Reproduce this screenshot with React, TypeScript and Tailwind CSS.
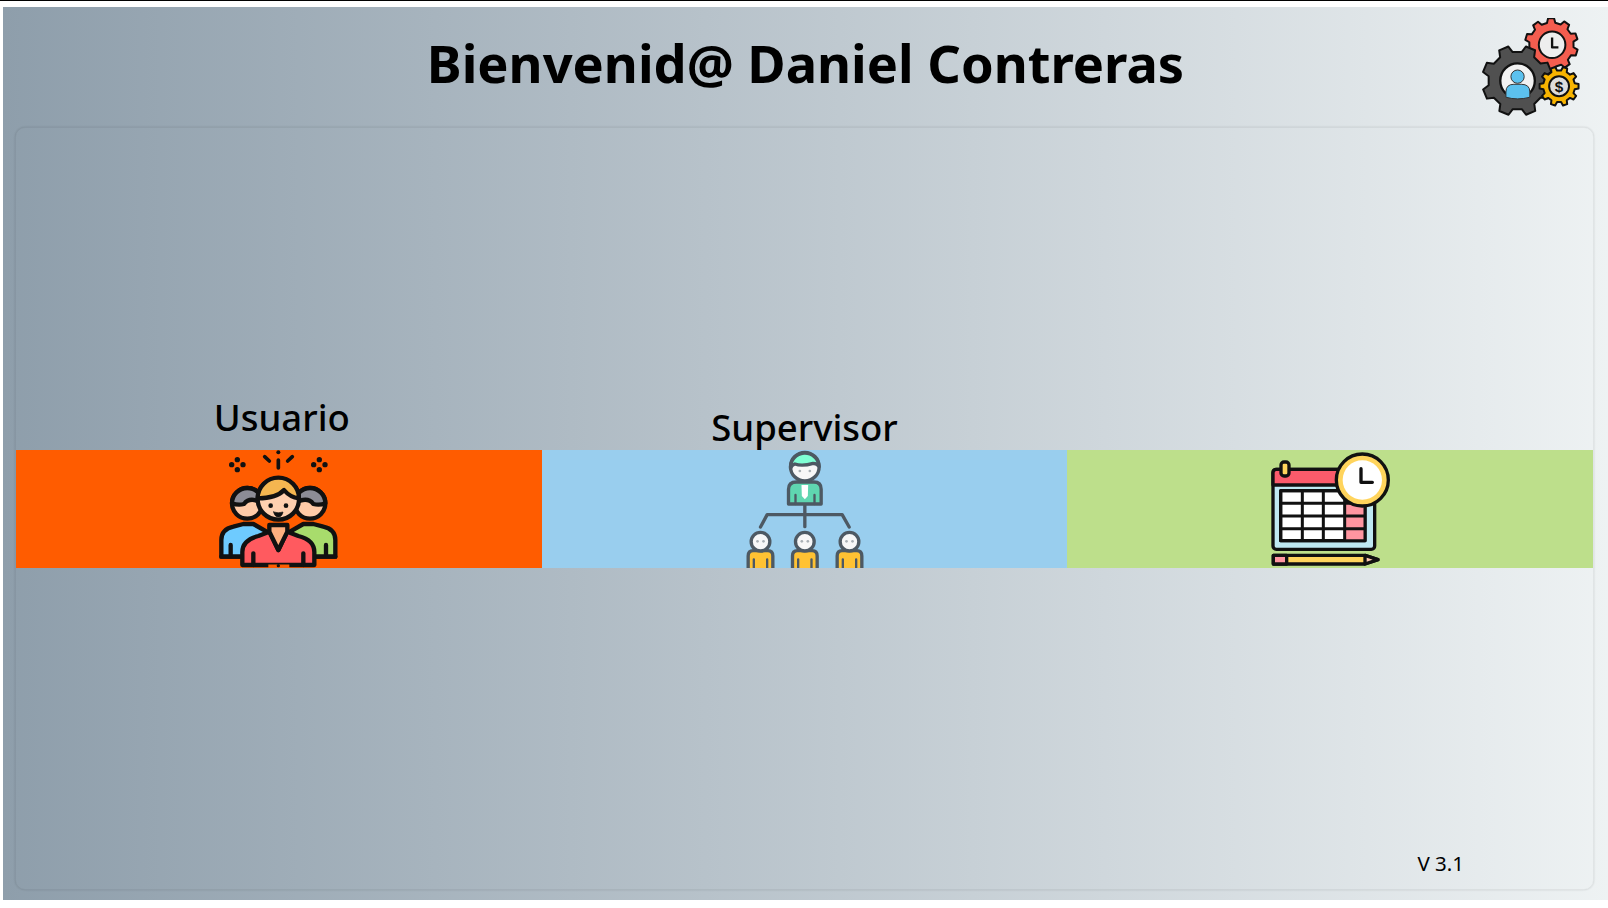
function gearPath(cx: number, cy: number, outer: number, root: number, teeth: number, rot = 0) {
  const step = (Math.PI * 2) / teeth;
  const pts: string[] = [];
  for (let i = 0; i < teeth; i++) {
    const a = rot + i * step;
    const corners: [number, number][] = [
      [root, a - step * 0.3],
      [outer, a - step * 0.18],
      [outer, a + step * 0.18],
      [root, a + step * 0.3],
    ];
    corners.forEach(([r, t]) => {
      pts.push(`${(cx + r * Math.cos(t)).toFixed(1)} ${(cy + r * Math.sin(t)).toFixed(1)}`);
    });
  }
  return `M${pts.join('L')}Z`;
}

function GearsLogo() {
  return (
    <svg viewBox="120 50 310 300" className="h-[100px] w-[103px]">
      <g stroke="#111" strokeWidth="6" strokeLinejoin="round">
        <path d={gearPath(335, 130, 80, 67, 10, 0.3)} fill="#f45d4f" />
        <circle cx="337" cy="130" r="40" fill="#eeeeee" />
        <path d="M337 108V138H356" fill="none" strokeWidth="7" />
        <path d={gearPath(232, 238, 106, 87, 8, 0.39)} fill="#505050" />
        <circle cx="233" cy="238" r="52" fill="#f2f2f2" strokeWidth="7" />
        <circle cx="233" cy="226" r="20" fill="#5cc1ee" stroke="#333" strokeWidth="3" />
        <path d="M198 288V272Q198 249 222 249H244Q270 249 270 272V288Q233 298 198 288Z" fill="#5cc1ee" stroke="#333" strokeWidth="3" />
        <path d={gearPath(358, 255, 59, 48, 10, 0)} fill="#f8b400" />
        <circle cx="358" cy="255" r="30" fill="#dddddd" />
      </g>
      <text x="358" y="272" textAnchor="middle" fontSize="46" fontWeight="700" fontFamily="Liberation Sans, sans-serif" fill="#111">
        $
      </text>
    </svg>
  );
}

function UsersIcon() {
  return (
    <svg viewBox="45.5 180 380 354" className="h-[118px] w-[127px]" strokeLinecap="round" strokeLinejoin="round">
      <g fill="#111">
        <circle cx="235" cy="187" r="6" />
        {[
          [112, 224],
          [358, 224],
        ].map(([x, y]) => (
          <g key={x}>
            <circle cx={x} cy={y - 15} r="8" />
            <circle cx={x} cy={y + 15} r="8" />
            <circle cx={x - 17} cy={y} r="8" />
            <circle cx={x + 17} cy={y} r="8" />
          </g>
        ))}
      </g>
      <path d="M235 210V234M194 200L208 213M277 200L263 213" stroke="#111" strokeWidth="11" fill="none" />
      <g stroke="#111" strokeWidth="13">
        <path d="M64 500V450Q64 418 100 410L130 402H160L200 425L150 500Z" fill="#6ecbff" />
        <path d="M406 500V450Q406 418 370 410L340 402H310L270 425L320 500Z" fill="#a8dc6c" />
        <path d="M64 500H125M92 500V465M378 500V465M345 500H406" fill="none" />
        <circle cx="142" cy="340" r="46" fill="#ffcba8" />
        <path d="M96 340A46 46 0 0 1 188 340Q150 318 132 342Q115 347 96 340Z" fill="#8c8c96" />
        <circle cx="330" cy="340" r="46" fill="#ffcba8" />
        <path d="M284 340A46 46 0 0 1 376 340Q358 347 340 342Q322 318 284 340Z" fill="#8c8c96" />
        <path d="M127 525V486Q127 450 175 438L208 425L235 480L262 425L295 438Q343 450 343 486V525Z" fill="#ff5a5f" />
        <path d="M160 525V490M310 525V490" fill="none" />
        <path d="M208 405V425L235 480L262 425V405Z" fill="#ffb080" />
        <circle cx="235" cy="327" r="62" fill="#ffd0b0" />
        <path d="M173 325A62 62 0 0 1 297 325Q270 322 252 300Q230 325 173 325Z" fill="#f4b650" />
        <path d="M205 530H268" stroke="#ff5c00" strokeWidth="13" strokeLinecap="butt" />
      </g>
      <circle cx="212" cy="347" r="7" fill="#111" />
      <circle cx="258" cy="347" r="7" fill="#111" />
      <path d="M221 366Q235 371 249 366Q246 381 235 381Q224 381 221 366Z" fill="#111" stroke="#111" strokeWidth="2" />
      <circle cx="235" cy="527" r="5" fill="#111" />
    </svg>
  );
}

function Subordinate({ x }: { x: number }) {
  return (
    <g>
      <path d={`M${x - 37} 510V468Q${x - 37} 452 ${x - 22} 452H${x + 22}Q${x + 37} 452 ${x + 37} 468V510Z`} fill="#ffc233" />
      <path d={`M${x - 20} 510V478M${x + 20} 510V478`} fill="none" strokeWidth="7" />
      <circle cx={x} cy="425" r="28" fill="#f7f7f7" />
      <circle cx={x - 9} cy="424" r="4" fill="#a9b0b5" stroke="none" />
      <circle cx={x + 9} cy="424" r="4" fill="#a9b0b5" stroke="none" />
    </g>
  );
}

function HierarchyIcon() {
  return (
    <svg viewBox="122 150 380 354" className="h-[118px] w-[127px]" strokeLinecap="round" strokeLinejoin="round">
      <g stroke="#4d5963" strokeWidth="10">
        <path d="M313 315V380M180 381L200 344H425L446 381" fill="none" />
        <path d="M264 312V268Q264 246 288 246H340Q362 246 362 268V312Z" fill="#5fd6b0" />
        <path d="M285 312V285M342 312V285" fill="none" strokeWidth="7" />
        <path d="M303 255H323L322 288L313 298L304 288Z" fill="#ffffff" stroke="none" />
        <circle cx="313" cy="200" r="43" fill="#f7f7f7" />
        <path d="M270 205A43 43 0 0 1 356 200Q350 190 338 190Q305 200 283 192Q274 195 270 205Z" fill="#7fffd4" />
        <circle cx="298" cy="213" r="4" fill="#a9b0b5" stroke="none" />
        <circle cx="328" cy="213" r="4" fill="#a9b0b5" stroke="none" />
        <Subordinate x={180} />
        <Subordinate x={313} />
        <Subordinate x={447} />
      </g>
    </svg>
  );
}

function CalendarIcon() {
  return (
    <svg viewBox="51.5 30 380 354" className="h-[118px] w-[127px]" strokeLinecap="round" strokeLinejoin="round">
      <g stroke="#111" strokeWidth="10">
        <rect x="69" y="88" width="305" height="240" rx="10" fill="#bfe9f2" />
        <path d="M69 135V98Q69 88 79 88H364Q374 88 374 98V135Z" fill="#fb5b6b" />
        <rect x="92" y="152" width="253" height="150" fill="#ffffff" />
        <rect x="284" y="152" width="61" height="150" fill="#ff95a0" stroke="none" />
        <path d="M92 152H345V302H92ZM157 152V302M220 152V302M284 152V302M92 190H345M92 228H345M92 266H345" fill="none" strokeWidth="9" />
        <rect x="93" y="66" width="24" height="42" rx="9" fill="#ffd45c" />
        <circle cx="337" cy="120" r="78" fill="#ffd45c" />
        <circle cx="337" cy="120" r="59" fill="#ffffff" stroke="none" />
        <path d="M333 86V127H367" fill="none" />
        <path d="M70 346H345L384 359L345 372H70Z" fill="#ffd45c" />
        <path d="M70 346H110V372H70Z" fill="#ff95a0" />
        <path d="M345 346L384 359L345 372Z" fill="#ffc9b0" />
      </g>
    </svg>
  );
}

export default function App() {
  return (
    <div className="h-[908px] w-full overflow-hidden bg-white font-['Noto_Sans',sans-serif] text-black">
      <div className="h-px bg-black" />
      <div className="ml-[3px] mt-[6px] flex h-[893px] flex-col bg-gradient-to-r from-[#8e9eab] to-[#eef2f3]">
        <header className="grid h-[120px] shrink-0 grid-cols-[1fr_auto_1fr] items-center">
          <div />
          <h1 className="pb-[8px] text-[52.4px] font-bold leading-none">Bienvenid@ Daniel Contreras</h1>
          <div className="flex justify-end pr-[25px] pt-[2px]">
            <GearsLogo />
          </div>
        </header>
        <main className="ml-[12px] mr-[14px] flex h-[763px] flex-col rounded-[10px] border border-black/5 shadow-[0_0_2px_rgba(0,0,0,0.15)]">
          <div className="grid h-[322px] shrink-0 grid-cols-3 items-end">
            <p className="pb-[10px] pl-[6px] text-center text-[36.5px] font-medium leading-[46px]">Usuario</p>
            <p className="text-center text-[36.5px] font-medium leading-[46px]">Supervisor</p>
            <div />
          </div>
          <div className="grid h-[118px] shrink-0 grid-cols-3">
            <div className="flex justify-center bg-[#ff5c00]">
              <UsersIcon />
            </div>
            <div className="flex justify-center bg-[#99ceee]">
              <HierarchyIcon />
            </div>
            <div className="flex justify-center bg-[#bddf8b]">
              <CalendarIcon />
            </div>
          </div>
          <div className="flex flex-1 items-end justify-end pb-[12px] pr-[129px]">
            <span className="text-[20.5px] leading-[27px]">V 3.1</span>
          </div>
        </main>
      </div>
    </div>
  );
}
